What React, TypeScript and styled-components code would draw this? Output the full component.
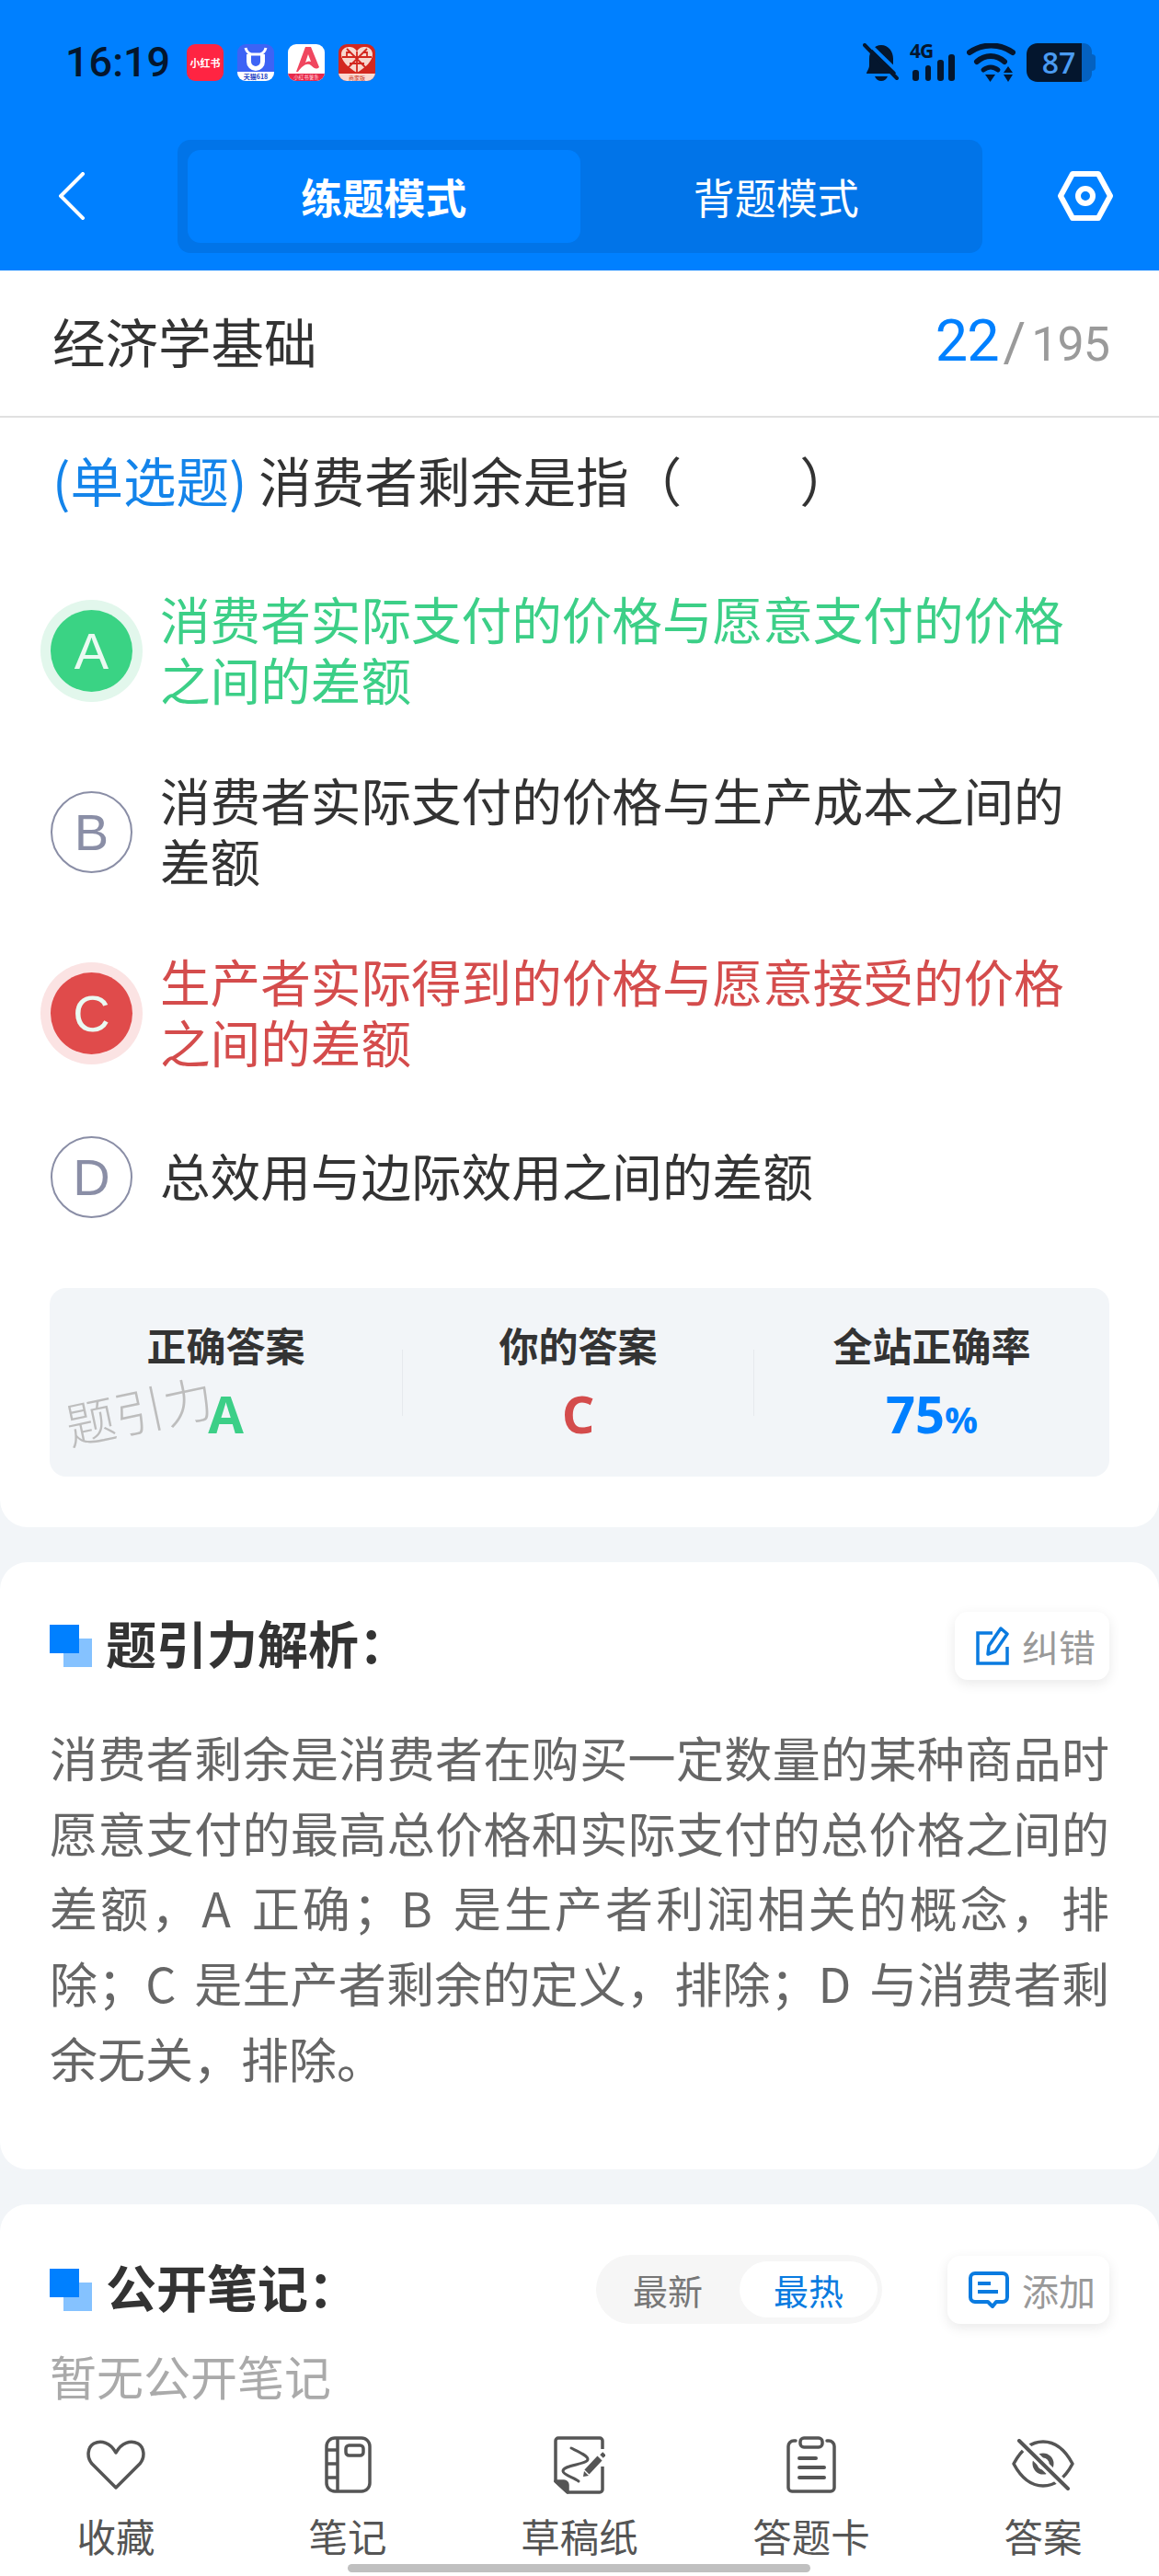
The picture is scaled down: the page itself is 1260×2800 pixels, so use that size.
import React from 'react'
import styled, { createGlobalStyle } from 'styled-components'

const GlobalStyle = createGlobalStyle`
  html, body { margin: 0; padding: 0; background: #f2f5f8; }
  * { box-sizing: border-box; }
  body { font-family: 'Noto Sans CJK SC', 'Noto Sans', sans-serif; }
`

const BLUE = '#0080ff'
const GREEN = '#3ccf87'
const RED = '#d44c4c'

const Page = styled.div`
  width: 1260px;
  height: 2800px;
  display: flex;
  flex-direction: column;
  gap: 38px;
  overflow: hidden;
  background: #f2f5f8;
`

const Header = styled.header`
  height: 294px;
  background: ${BLUE};
  display: flex;
  flex-direction: column;
`

const StatusBar = styled.div`
  height: 152px;
  padding: 47px 69px 0 71px;
  display: flex;
  align-items: flex-start;
`

const Clock = styled.div`
  font-family: Roboto, sans-serif;
  font-weight: 500;
  font-size: 45px;
  line-height: 42px;
  color: #04162e;
  width: 132px;
`

const AppIcons = styled.div`
  display: flex;
  gap: 15px;
  padding-top: 1px;
`

const StatusRight = styled.div`
  margin-left: auto;
  display: flex;
  align-items: flex-start;
  gap: 12px;
`

const NavRow = styled.div`
  display: flex;
  align-items: flex-start;
  padding-left: 64px;
`

const BackButton = styled.div`
  width: 129px;
  padding-top: 35px;
  display: flex;
`

const ModeTabs = styled.div`
  width: 875px;
  height: 123px;
  padding: 11px;
  border-radius: 14px;
  background: #0174e8;
  display: flex;
`

const ModeTab = styled.div<{ $active?: boolean }>`
  flex: 1;
  border-radius: 14px;
  background: ${p => (p.$active ? BLUE : 'transparent')};
  color: #fff;
  font-size: 45px;
  font-weight: ${p => (p.$active ? 700 : 400)};
  display: flex;
  align-items: center;
  justify-content: center;
`

const GearButton = styled.div`
  margin-left: 82px;
  padding-top: 34px;
  display: flex;
`

const QuestionCard = styled.section`
  height: 1366px;
  background: #fff;
  border-radius: 0 0 30px 30px;
  display: flex;
  flex-direction: column;
`

const TitleRow = styled.div`
  height: 160px;
  padding: 0 54px 6px 57px;
  border-bottom: 2px solid #e0e0e0;
  display: flex;
  align-items: center;
  justify-content: space-between;
`

const SubjectName = styled.div`
  font-size: 57.5px;
  color: #333;
`

const Progress = styled.div`
  display: flex;
  align-items: baseline;
  font-family: Roboto, sans-serif;
  font-size: 52px;
  letter-spacing: -1px;
  color: #9a9a9a;
`

const ProgressNow = styled.span`
  font-size: 63px;
  color: ${BLUE};
`

const Slash = styled.span`
  font-size: 60px;
  margin: 0 7px 0 5px;
`

const Question = styled.div`
  padding: 29px 0 0 57px;
  font-size: 57.5px;
  line-height: 76px;
  color: #333;
`

const QuestionType = styled.span`
  color: #1484ea;
`

const OptionList = styled.div`
  margin-top: 85px;
  padding: 0 54px 0 44px;
  display: flex;
  flex-direction: column;
  gap: 70px;
`

const OptionRow = styled.div`
  display: flex;
  align-items: center;
  gap: 19px;
`

const OptionMark = styled.div<{ $ring?: string }>`
  flex: none;
  width: 111px;
  height: ${p => (p.$ring ? '111px' : '89px')};
  border-radius: 50%;
  display: flex;
  align-items: center;
  justify-content: center;
  background: ${p => p.$ring || 'transparent'};
`

const OptionDisc = styled.div<{ $color?: string }>`
  width: 89px;
  height: 89px;
  border-radius: 50%;
  display: flex;
  align-items: center;
  justify-content: center;
  font-family: 'Liberation Sans', sans-serif;
  font-size: 56px;
  background: ${p => p.$color || '#fff'};
  color: ${p => (p.$color ? '#eafaf2' : '#8a8ea6')};
  border: ${p => (p.$color ? 'none' : '2px solid #8a8ea6')};
`

const OptionText = styled.div<{ $color?: string }>`
  font-size: 54.6px;
  line-height: 66px;
  margin-top: -5px;
  color: ${p => p.$color || '#333'};
`

const StatsBox = styled.div`
  position: relative;
  margin: 76px 54px 0;
  height: 205px;
  background: #f2f5f8;
  border-radius: 18px;
  display: grid;
  grid-template-columns: 384px 382px 1fr;
  align-items: center;
`

const StatCell = styled.div<{ $divider?: boolean }>`
  height: 72px;
  display: flex;
  flex-direction: column;
  align-items: center;
  justify-content: center;
  border-right: ${p => (p.$divider ? '1px solid #e6e9ed' : 'none')};
`

const StatLabel = styled.div`
  font-size: 43px;
  font-weight: 700;
  line-height: 62px;
  color: #333;
`

const StatValue = styled.div<{ $color: string }>`
  font-family: 'Open Sans', sans-serif;
  font-size: 56px;
  font-weight: 700;
  line-height: 66px;
  margin: 11px 0 6px;
  color: ${p => p.$color};
`

const Percent = styled.span`
  font-size: 40px;
  line-height: 0;
`

const Watermark = styled.div`
  position: absolute;
  left: 16px;
  top: 100px;
  font-size: 54px;
  font-weight: 300;
  line-height: 64px;
  color: #bdbdbd;
  transform: rotate(-12deg);
  pointer-events: none;
`

const Card = styled.section<{ $grow?: boolean }>`
  background: #fff;
  border-radius: 30px 30px 0 0;
  padding: 0 54px;
  ${p => (p.$grow ? 'flex: 1; display: flex; flex-direction: column; padding-top: 55px;' : 'border-radius: 30px; height: 660px; padding-top: 53px;')}
`

const SectionHead = styled.div`
  display: flex;
  align-items: center;
  height: 75px;
`

const SectionMark = styled.div`
  position: relative;
  flex: none;
  width: 46px;
  height: 46px;
  margin-right: 15px;
  &::before {
    content: '';
    position: absolute;
    right: 0;
    bottom: 0;
    width: 31px;
    height: 31px;
    background: #85c2ff;
  }
  &::after {
    content: '';
    position: absolute;
    left: 0;
    top: 0;
    width: 32px;
    height: 31px;
    background: ${BLUE};
  }
`

const SectionTitle = styled.div`
  font-size: 55px;
  font-weight: 700;
  color: #333;
  flex: 1;
  padding-bottom: 10px;
`

const ChipButton = styled.div`
  height: 74px;
  padding: 0 15px 0 23px;
  display: flex;
  align-items: center;
  gap: 14px;
  background: #fff;
  border-radius: 14px;
  box-shadow: 0 4px 14px rgba(0, 0, 0, 0.09);
  font-size: 40px;
  color: #999;
`

const Explanation = styled.p`
  margin: 43px 0 0;
  font-size: 52px;
  line-height: 81.7px;
  word-spacing: 8px;
  color: #666;
  text-align: justify;
`

const SortToggle = styled.div`
  width: 311px;
  height: 75px;
  margin-right: 71px;
  padding: 7px 5px 7px 0;
  border-radius: 38px;
  background: #f6f6f6;
  display: flex;
`

const SortOption = styled.div<{ $active?: boolean }>`
  flex: ${p => (p.$active ? '0 0 150px' : 1)};
  border-radius: 31px;
  background: ${p => (p.$active ? '#fff' : 'transparent')};
  color: ${p => (p.$active ? '#0a7be0' : '#777')};
  font-size: 38px;
  display: flex;
  align-items: center;
  justify-content: center;
`

const EmptyNote = styled.div`
  margin-top: 20px;
  font-size: 51px;
  line-height: 72px;
  color: #aaa;
`

const TabBar = styled.nav`
  margin: auto -54px 0;
  height: 153px;
  display: grid;
  grid-template-columns: repeat(5, 1fr);
  position: relative;
`

const TabItem = styled.div`
  display: flex;
  flex-direction: column;
  align-items: center;
  color: #555;
  font-size: 42.500px;
  line-height: 60px;
`

const TabIcon = styled.div`
  height: 64px;
  margin-bottom: 15px;
  display: flex;
  align-items: center;
`

const HomeIndicator = styled.div`
  position: absolute;
  left: 378px;
  bottom: 4px;
  width: 503px;
  height: 9px;
  border-radius: 5px;
  background: #c0c0c0;
`

function XhsIcon() {
  return (
    <svg width="40" height="40" viewBox="0 0 40 40">
      <rect width="40" height="40" rx="9" fill="#ff2442" />
      <text x="20" y="24.500" textAnchor="middle" fontSize="11" fontWeight="700" fill="#fff">小红书</text>
    </svg>
  )
}

function TmallIcon() {
  return (
    <svg width="40" height="40" viewBox="0 0 40 40">
      <rect width="40" height="40" rx="9" fill="#3d63f5" />
      <path d="M0 30h40v1a9 9 0 0 1-9 9H9a9 9 0 0 1-9-9z" fill="#fff" />
      <path d="M12.500 11v8a7.500 7.500 0 0 0 15 0v-8" fill="none" stroke="#fff" strokeWidth="5" />
      <path d="M9 4c1 4 3 6 6 7h10c3-1 5-3 6-7" fill="none" stroke="#fff" strokeWidth="3" />
      <text x="20" y="37.500" textAnchor="middle" fontSize="7" fontWeight="700" fill="#2442c4">天猫618</text>
    </svg>
  )
}

function RedAIcon() {
  return (
    <svg width="40" height="40" viewBox="0 0 40 40">
      <rect width="40" height="40" rx="9" fill="#fff" />
      <path d="M0 32h40v-1 0a9 9 0 0 1-9 9H9a9 9 0 0 1-9-9z" fill="#e8294b" />
      <path d="M19 3h6l9 22c-3 3-6 1-9-2-4-3-9 0-14 7h-2z" fill="#f0465f" />
      <path d="M22 11l3 8c-2-1-4-.5-6 1z" fill="#fff" />
      <text x="20" y="38" textAnchor="middle" fontSize="5.500" fill="#ffd5dc">小红书薯条</text>
    </svg>
  )
}

function PddIcon() {
  return (
    <svg width="40" height="40" viewBox="0 0 40 40">
      <rect width="40" height="40" rx="9" fill="#d3281f" />
      <path d="M0 32h40v-1a9 9 0 0 1-9 9H9a9 9 0 0 1-9-9z" fill="#fbd9d0" />
      <path d="M20 31C10 25 3 18 3 11c0-5 4-8 8-8 4 0 7 1 9 5 2-4 5-5 9-5 4 0 8 3 8 8 0 7-7 14-17 20z" fill="#f8d9cf" />
      <path d="M20 8v23M4 14h32M9 5l22 22M31 5 9 27M13 9h-4v5M27 9h4v5M12 21h16" stroke="#d3281f" strokeWidth="1.800" fill="none" />
      <text x="20" y="38.500" textAnchor="middle" fontSize="6" fill="#c8321f">商家版</text>
    </svg>
  )
}

function MutedBell() {
  return (
    <svg width="39" height="41" viewBox="0 0 39 41" fill="#04162e">
      <path d="M20 2C28 2 33 9 33 17V24C33 28 36 31 36 33H4C4 31 7 28 7 24V17C7 9 12 2 20 2Z" />
      <path d="M13 36h14c-1 3-4 5-7 5s-6-2-7-5z" />
      <path d="M5 -1 42 35" stroke={BLUE} strokeWidth="4" />
      <path d="M2 2 37 38" stroke="#04162e" strokeWidth="4" strokeLinecap="round" />
    </svg>
  )
}

function Signal4G() {
  return (
    <svg width="50" height="42" viewBox="0 0 50 42" fill="#04162e">
      <text x="0" y="16" fontFamily="'Open Sans', sans-serif" fontSize="21" fontWeight="700" letterSpacing="-1">4G</text>
      <rect x="3" y="29" width="7" height="12" rx="3" />
      <rect x="17" y="24" width="6" height="17" rx="3" />
      <rect x="30" y="18" width="7" height="23" rx="3" />
      <rect x="42" y="12" width="7" height="29" rx="3" />
    </svg>
  )
}

function WifiIcon() {
  return (
    <svg width="53" height="44" viewBox="0 0 53 44" fill="none" stroke="#04162e" strokeWidth="6" strokeLinecap="round">
      <path d="M3 10C17 0 36 0 50 10" />
      <path d="M11 20C20 12 32 12 41 20" />
      <path d="M18 29c5-4 11-4 16 0" strokeWidth="5" />
      <path d="M20 34h11l-5.500 8z" fill="#04162e" stroke="none" />
      <path d="M45 25l5 7H40zM40 34h10l-5 8z" fill="#04162e" stroke="none" />
    </svg>
  )
}

function BatteryIcon() {
  return (
    <svg width="75" height="42" viewBox="0 0 75 42">
      <path d="M60 0h2c5 0 9 4 9 9v3c2 0 4 1 4 3v12c0 2-2 3-4 3v3c0 5-4 9-9 9h-2z" fill="#0461c0" />
      <path d="M12 0h48v42H12C5 42 0 37 0 30V12C0 5 5 0 12 0z" fill="#04162e" />
      <text x="35" y="32.500" textAnchor="middle" fontFamily="'Open Sans', sans-serif" fontSize="32" fontWeight="600" fill="#4a9bf2">87</text>
    </svg>
  )
}

function BackIcon() {
  return (
    <svg width="28" height="52" viewBox="0 0 28 52" fill="none" stroke="#fff" strokeWidth="4" strokeLinecap="square">
      <path d="M26 2 2 26l24 24" />
    </svg>
  )
}

function HexIcon() {
  return (
    <svg width="60" height="54" viewBox="0 0 60 54" fill="none" stroke="#fff" strokeWidth="6" strokeLinejoin="round">
      <path d="M16 3h28l13 24-13 24H16L3 27z" />
      <circle cx="30" cy="27" r="8" />
    </svg>
  )
}

function EditIcon() {
  return (
    <svg width="36" height="42" viewBox="0 0 36 42" fill="none" stroke="#0a7be0" strokeWidth="3.500">
      <path d="M18 7H2v33h32V22" />
      <path d="M27 2l7 6-13 19-8 3 1-9z" strokeLinejoin="round" />
    </svg>
  )
}

function CommentIcon() {
  return (
    <svg width="44" height="40" viewBox="0 0 44 40" fill="none" stroke="#0a7be0" strokeWidth="4">
      <path d="M7 2h30a5 5 0 0 1 5 5v21a5 5 0 0 1-5 5h-7l-4 5-5-5H7a5 5 0 0 1-5-5V7a5 5 0 0 1 5-5z" strokeLinejoin="round" />
      <path d="M10 13h14M10 22h22" />
    </svg>
  )
}

function HeartIcon() {
  return (
    <svg width="64" height="56" viewBox="0 0 64 56" fill="none" stroke="#555" strokeWidth="3.500" strokeLinejoin="round">
      <path d="M32 53 6 27C0 20 1 9 8 5c8-4 18-1 24 10C38 4 48 1 56 5c7 4 8 15 2 22z" />
    </svg>
  )
}

function NotebookIcon() {
  return (
    <svg width="51" height="62" viewBox="0 0 51 62" fill="none" stroke="#555" strokeWidth="3.500">
      <rect x="2" y="2" width="47" height="58" rx="9" />
      <path d="M14 2v58M2 15h12M2 30h12M2 45h12" />
      <rect x="23" y="10" width="19" height="11" rx="3.500" />
    </svg>
  )
}

function DraftIcon() {
  return (
    <svg width="56" height="63" viewBox="0 0 56 63" fill="none" stroke="#555" strokeWidth="3.500" strokeLinejoin="round">
      <path d="M53 14V5a3 3 0 0 0-3-3H5a3 3 0 0 0-3 3v44l13 12h35a3 3 0 0 0 3-3V33" />
      <path d="M2 49h9a4 4 0 0 1 4 4v8z" fill="#555" />
      <path d="M19 13c6 3 18 8 18 12 0 6-27 6-27 13 0 4 12 7 17 11" strokeLinecap="round" strokeWidth="3" />
      <path d="M36 39 50 24" strokeWidth="7" />
      <path d="M32 44l1-6 5 5z" fill="#555" stroke="none" />
      <path d="M52 22l3-3" strokeWidth="5" />
    </svg>
  )
}

function AnswerCardIcon() {
  return (
    <svg width="54" height="62" viewBox="0 0 54 62" fill="none" stroke="#555" strokeWidth="3.500" strokeLinecap="round">
      <path d="M10 5H8a6 6 0 0 0-6 6v45a4 4 0 0 0 4 4h42a4 4 0 0 0 4-4V11a6 6 0 0 0-6-6h-2" />
      <rect x="15" y="2" width="24" height="10" rx="4" />
      <path d="M14 24h18M14 34h27M14 45h27" strokeWidth="4" />
    </svg>
  )
}

function EyeOffIcon() {
  return (
    <svg width="68" height="56" viewBox="0 0 68 56" fill="none" stroke="#555" strokeWidth="3.500" strokeLinejoin="round">
      <path d="M2 27C10 12 20 3 34 3s24 9 32 24c-8 15-18 24-32 24S10 42 2 27z" />
      <circle cx="34" cy="27" r="9" strokeWidth="5" />
      <path d="M8 2 61 54" stroke="#fff" strokeWidth="10" />
      <path d="M8 2 61 54" strokeLinecap="round" strokeWidth="4" />
    </svg>
  )
}

const options = [
  { key: 'A', text: '消费者实际支付的价格与愿意支付的价格之间的差额', color: GREEN, disc: '#3ad384', ring: '#e2f7ec' },
  { key: 'B', text: '消费者实际支付的价格与生产成本之间的差额' },
  { key: 'C', text: '生产者实际得到的价格与愿意接受的价格之间的差额', color: RED, disc: '#e04b4b', ring: '#fbe3e3' },
  { key: 'D', text: '总效用与边际效用之间的差额' },
]

const tabs = [
  { label: '收藏', icon: <HeartIcon /> },
  { label: '笔记', icon: <NotebookIcon /> },
  { label: '草稿纸', icon: <DraftIcon /> },
  { label: '答题卡', icon: <AnswerCardIcon /> },
  { label: '答案', icon: <EyeOffIcon /> },
]

export default function App() {
  return (
    <>
      <GlobalStyle />
      <Page>
        <div>
          <Header>
            <StatusBar>
              <Clock>16:19</Clock>
              <AppIcons>
                <XhsIcon />
                <TmallIcon />
                <RedAIcon />
                <PddIcon />
              </AppIcons>
              <StatusRight>
                <MutedBell />
                <Signal4G />
                <WifiIcon />
                <BatteryIcon />
              </StatusRight>
            </StatusBar>
            <NavRow>
              <BackButton><BackIcon /></BackButton>
              <ModeTabs>
                <ModeTab $active>练题模式</ModeTab>
                <ModeTab>背题模式</ModeTab>
              </ModeTabs>
              <GearButton><HexIcon /></GearButton>
            </NavRow>
          </Header>
          <QuestionCard>
            <TitleRow>
              <SubjectName>经济学基础</SubjectName>
              <Progress><ProgressNow>22</ProgressNow><Slash>/</Slash>195</Progress>
            </TitleRow>
            <Question><QuestionType>(单选题)</QuestionType> 消费者剩余是指（　　 ）</Question>
            <OptionList>
              {options.map(o => (
                <OptionRow key={o.key}>
                  <OptionMark $ring={o.ring}>
                    <OptionDisc $color={o.disc}>{o.key}</OptionDisc>
                  </OptionMark>
                  <OptionText $color={o.color}>{o.text}</OptionText>
                </OptionRow>
              ))}
            </OptionList>
            <StatsBox>
              <StatCell $divider>
                <StatLabel>正确答案</StatLabel>
                <StatValue $color={GREEN}>A</StatValue>
              </StatCell>
              <StatCell $divider>
                <StatLabel>你的答案</StatLabel>
                <StatValue $color={RED}>C</StatValue>
              </StatCell>
              <StatCell>
                <StatLabel>全站正确率</StatLabel>
                <StatValue $color={BLUE}>75<Percent>%</Percent></StatValue>
              </StatCell>
              <Watermark>题引力</Watermark>
            </StatsBox>
          </QuestionCard>
        </div>
        <Card>
          <SectionHead>
            <SectionMark />
            <SectionTitle>题引力解析：</SectionTitle>
            <ChipButton><EditIcon />纠错</ChipButton>
          </SectionHead>
          <Explanation>
            消费者剩余是消费者在购买一定数量的某种商品时愿意支付的最高总价格和实际支付的总价格之间的差额，A 正确；B 是生产者利润相关的概念，排除；C 是生产者剩余的定义，排除；D 与消费者剩余无关，排除。
          </Explanation>
        </Card>
        <Card $grow>
          <SectionHead>
            <SectionMark />
            <SectionTitle>公开笔记：</SectionTitle>
            <SortToggle>
              <SortOption>最新</SortOption>
              <SortOption $active>最热</SortOption>
            </SortToggle>
            <ChipButton><CommentIcon />添加</ChipButton>
          </SectionHead>
          <EmptyNote>暂无公开笔记</EmptyNote>
          <TabBar>
            {tabs.map(t => (
              <TabItem key={t.label}>
                <TabIcon>{t.icon}</TabIcon>
                {t.label}
              </TabItem>
            ))}
            <HomeIndicator />
          </TabBar>
        </Card>
      </Page>
    </>
  )
}
